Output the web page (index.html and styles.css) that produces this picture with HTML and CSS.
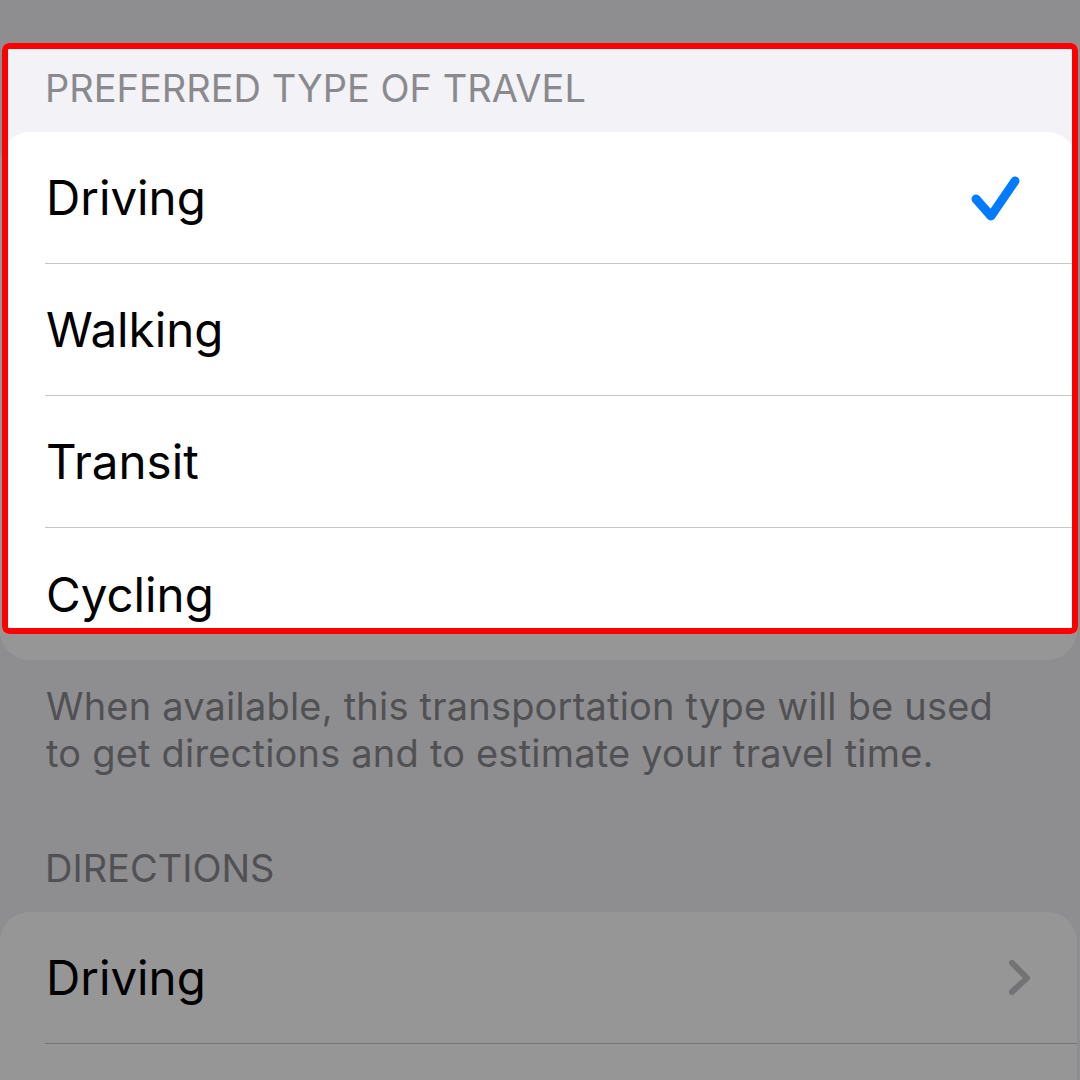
FILE: index.html
```html
<!DOCTYPE html>
<html lang="en">
<head>
    <meta charset="UTF-8">
    <meta name="viewport" content="width=device-width, initial-scale=1.0">
    <title>Maps - Preferred Type of Travel</title>
    <link rel="stylesheet" href="styles.css">
</head>
<body>
    <div class="settings">
        <h2 class="section-header">Preferred Type of Travel</h2>
        <ul class="group">
            <li class="row">
                <div class="row-inner">
                    <span class="label">Driving</span>
                    <svg class="check" width="52" height="52" viewBox="0 0 52 52">
                        <path d="M8 27 L23 44 L47 9" fill="none" stroke="#007aff" stroke-width="9" stroke-linecap="round" stroke-linejoin="round"/>
                    </svg>
                </div>
            </li>
            <li class="row">
                <div class="row-inner"><span class="label">Walking</span></div>
            </li>
            <li class="row">
                <div class="row-inner"><span class="label">Transit</span></div>
            </li>
            <li class="row">
                <div class="row-inner"><span class="label">Cycling</span></div>
            </li>
        </ul>
        <p class="section-footer">When available, this transportation type will be used<br>to get directions and to estimate your travel time.</p>

        <h2 class="section-header second">Directions</h2>
        <ul class="group">
            <li class="row">
                <div class="row-inner">
                    <span class="label">Driving</span>
                    <svg class="chevron" width="30" height="40" viewBox="0 0 30 40">
                        <path d="M9 5 L24 20 L9 34" fill="none" stroke="#c4c4c7" stroke-width="6" stroke-linecap="round" stroke-linejoin="round"/>
                    </svg>
                </div>
            </li>
            <li class="row">
                <div class="row-inner"></div>
            </li>
        </ul>
    </div>

    <!-- annotation: highlighted area, everything else dimmed -->
    <div class="highlight"></div>
</body>
</html>
```

FILE: styles.css
```css
* {
    box-sizing: border-box;
}

body {
    margin: 0;
    background-color: #f2f2f7;
    font-family: Inter, "Noto Sans", "Liberation Sans", sans-serif;
    overflow: hidden;
}

.settings {
    width: 1080px;
}

.section-header {
    margin: 0;
    padding: 65px 45px 21px;
    font-size: 38px;
    font-weight: 400;
    line-height: 46px;
    text-transform: uppercase;
    color: #8a8a8e;
}

.section-header.second {
    padding-top: 0;
    padding-bottom: 20px;
    line-height: 47px;
}

.group {
    list-style: none;
    margin: 0 3px 0 0;
    padding: 0;
    background-color: #ffffff;
    border-radius: 30px;
    overflow: hidden;
}

.row {
    padding-left: 45px;
}

.row-inner {
    display: flex;
    align-items: center;
    height: 132px;
    padding-right: 50px;
    border-bottom: 1.5px solid #c6c6c8;
}

.row:last-child .row-inner {
    border-bottom: none;
}

.label {
    font-size: 47.5px;
    color: #000000;
    padding-left: 1px;
}

.check {
    margin-left: auto;
    margin-right: 7px;
}

.chevron {
    margin-left: auto;
    margin-right: -6px;
}

.section-footer {
    margin: 0;
    padding: 23px 46px 68px;
    font-size: 38px;
    line-height: 47px;
    letter-spacing: 0.2px;
    color: #8a8a8e;
}

.highlight {
    position: absolute;
    top: 43px;
    left: 2px;
    width: 1076px;
    height: 591px;
    border: 6px solid #ff0000;
    border-radius: 7px;
    box-shadow: 0 0 0 1500px rgba(0, 0, 0, 0.41);
    pointer-events: none;
}
```
